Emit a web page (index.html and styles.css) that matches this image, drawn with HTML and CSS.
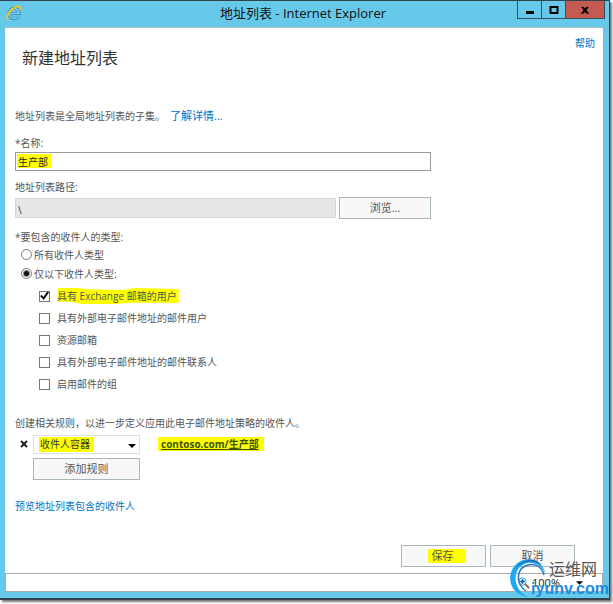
FILE: index.html
```html
<!DOCTYPE html>
<html lang="zh-CN">
<head>
    <meta charset="UTF-8">
    <meta name="viewport" content="width=device-width, initial-scale=1.0">
    <title>地址列表 - Internet Explorer</title>
    <link rel="stylesheet" href="styles.css">
</head>
<body>
    <div class="window">
        <div class="titlebar">
            <svg class="ie-icon" width="16" height="16" viewBox="0 0 16 16" aria-hidden="true">
                <path d="M12.700 11.200a5.200 5.200 0 1 1 .8-2.700H4.500" fill="none" stroke="#3a8fc4" stroke-width="3.200"/>
                <path d="M12.500 11a5 5 0 1 1 .7-2.600H4.500" fill="none" stroke="#86d0f2" stroke-width="1.400"/>
                <path d="M2.200 14.700C-1 13 3 5.600 8.600 2.600c4-2.200 6.900-1.400 5.300 2.200" fill="none" stroke="#f3c51d" stroke-width="1.800"/>
            </svg>
            <span class="titlebar-text">地址列表 - Internet Explorer</span>
            <div class="window-buttons">
                <button class="win-btn" aria-label="最小化">
                    <svg width="10" height="10" viewBox="0 0 10 10"><path d="M1 7.500h8" stroke="#000" stroke-width="3"/></svg>
                </button>
                <button class="win-btn" aria-label="最大化">
                    <svg width="10" height="10" viewBox="0 0 10 10"><rect x="1.500" y="2" width="7" height="6" fill="none" stroke="#000" stroke-width="2"/></svg>
                </button>
                <button class="win-btn win-close" aria-label="关闭">
                    <svg width="10" height="10" viewBox="0 0 10 10"><path d="M1.500 2h2L5 3.800 6.500 2h2L6.200 5l2.500 3.500h-2.200L5 6.400 3.500 8.500H1.300L3.800 5z" fill="#000" stroke="#000" stroke-width=".4"/></svg>
                </button>
            </div>
        </div>

        <div class="page">
            <form class="form">
                <header class="form-header">
                    <h1>新建地址列表</h1>
                    <a class="help" href="#">帮助</a>
                </header>

                <p class="intro">地址列表是全局地址列表的子集。<a class="more" href="#">了解详情...</a></p>

                <label class="name-label" for="name">*名称:</label>
                <input class="name-input" id="name" type="text" value="生产部">

                <label class="path-label" for="path">地址列表路径:</label>
                <div class="path-row">
                    <input class="path-input" id="path" type="text" value="\" readonly>
                    <button class="btn browse" type="button">浏览...</button>
                </div>

                <fieldset class="types">
                    <legend>*要包含的收件人的类型:</legend>
                    <label class="radio-row"><input type="radio" name="type">所有收件人类型</label>
                    <label class="radio-row"><input type="radio" name="type" checked>仅以下收件人类型:</label>
                    <div class="checks">
                        <label class="check-row"><input type="checkbox" checked><span class="marked">具有 Exchange 邮箱的用户</span></label>
                        <label class="check-row"><input type="checkbox"><span>具有外部电子邮件地址的邮件用户</span></label>
                        <label class="check-row"><input type="checkbox"><span>资源邮箱</span></label>
                        <label class="check-row"><input type="checkbox"><span>具有外部电子邮件地址的邮件联系人</span></label>
                        <label class="check-row"><input type="checkbox"><span>启用邮件的组</span></label>
                    </div>
                </fieldset>

                <p class="rules-text">创建相关规则，以进一步定义应用此电子邮件地址策略的收件人。</p>
                <div class="rule">
                    <button class="remove" type="button" aria-label="删除规则">
                        <svg width="8" height="8" viewBox="0 0 8 8"><path d="M1 1l6 6M7 1L1 7" stroke="#222" stroke-width="2"/></svg>
                    </button>
                    <div class="select-wrap">
                        <select aria-label="规则">
                            <option>收件人容器</option>
                        </select>
                        <svg class="arrow" width="8" height="4" viewBox="0 0 8 4"><path d="M0 0h8L4 4z" fill="#000"/></svg>
                    </div>
                    <a class="container-link" href="#">contoso.com/生产部</a>
                </div>
                <button class="btn add-rule" type="button">添加规则</button>

                <a class="preview" href="#">预览地址列表包含的收件人</a>

                <div class="actions">
                    <button class="btn action" type="button"><span class="save-mark">保存</span></button>
                    <button class="btn action" type="button">取消</button>
                </div>
            </form>

            <div class="statusbar">
                <button class="zoom" type="button">
                    <svg width="12" height="12" viewBox="0 0 12 12" aria-hidden="true">
                        <path d="M7 7l4 4" stroke="#8a6a45" stroke-width="2"/>
                        <circle cx="4.500" cy="4.500" r="3.700" fill="#d9edfb" stroke="#5b9bd0"/>
                        <path d="M4.500 2.300v4.400M2.300 4.500h4.400" stroke="#1556a8" stroke-width="1.500"/>
                    </svg>
                    <span>100%</span>
                    <svg class="zoom-arrow" width="7" height="4" viewBox="0 0 8 4" aria-hidden="true"><path d="M0 0h8L4 4z" fill="#000"/></svg>
                </button>
            </div>
        </div>
    </div>

    <div class="watermark">
        <svg class="watermark-logo" width="40" height="42" viewBox="0 0 40 42" aria-hidden="true">
            <path d="M19 40C3 38-3 23 4 11 12-1 31-2 37 17 31 5 18 2 10 11 3 20 7 34 19 40z" fill="#1daaf0"/>
            <path d="M17 34C7 27 7 14 16 9c8-4 17 0 19 9" fill="none" stroke="#2a77c5" stroke-width="1.500"/>
            <path d="M6 12C12 2 27-1 33 9 25 2 14 3 6 12z" fill="#1a6eb8"/>
        </svg>
        <span class="watermark-name">运维网</span>
        <span class="watermark-site">iyunv.com</span>
    </div>
</body>
</html>
```
FILE: styles.css
```css
* {
    box-sizing: border-box;
}

body {
    margin: 0;
    min-height: 100vh;
    display: flex;
    padding: 0 3px 4px 0;
    background: #fff;
    color: #555;
    font-family: "Open Sans", "Noto Sans CJK SC", sans-serif;
    font-size: 10px;
    line-height: 16px;
    position: relative;
}

h1, p, fieldset, legend {
    margin: 0;
    padding: 0;
    border: none;
}

a {
    color: #0072c6;
    text-decoration: none;
}

button, input, select {
    font: inherit;
    color: inherit;
    margin: 0;
    padding: 0;
}

/* Window */
.window {
    flex: 1;
    display: flex;
    flex-direction: column;
    padding: 0 6px 6px 5px;
    background: #66c9ea;
    border: solid #34434d;
    border-width: 1px 1px 2px 0;
    box-shadow: 2px 2px 2px #777;
}

.titlebar {
    height: 26px;
    display: flex;
    align-items: flex-start;
}

.ie-icon {
    margin: 4px 0 0 1px;
}

.titlebar-text {
    flex: 1;
    margin-left: 66px;
    padding-top: 2px;
    text-align: center;
    font-size: 13px;
    line-height: 20px;
    color: #111;
}

.window-buttons {
    display: flex;
    margin-right: -2px;
}

.win-btn {
    width: 25px;
    height: 18px;
    display: flex;
    align-items: center;
    justify-content: center;
    background: #66c9ea;
    border: 1px solid #35505e;
    border-top: none;
    margin-left: -1px;
}

.win-close {
    width: 40px;
    background: #c45a50;
}

.page {
    flex: 1;
    display: flex;
    flex-direction: column;
    background: #fff;
    border-top: 1px solid #a9bfc9;
}

/* Form */
.form {
    flex: 1;
    display: flex;
    flex-direction: column;
    align-items: flex-start;
    padding: 7px 8px 6px 10px;
}

.form-header {
    align-self: stretch;
    display: flex;
    justify-content: space-between;
    align-items: flex-start;
}

h1 {
    margin: 11px 0 0 7px;
    font-size: 16px;
    font-weight: normal;
    line-height: 24px;
    color: #333;
}

.intro {
    margin-top: 38px;
}

.more {
    margin-left: 5px;
    font-size: 11px;
}

.name-label {
    margin-top: 11px;
}

.name-input,
.path-row {
    width: 100%;
    max-width: 416px;
}

.name-input {
    height: 19px;
    margin-top: 1px;
    padding-left: 2px;
    border: 1px solid #999;
    color: #222;
    background: linear-gradient(#ff0, #ff0) 1px 1px / 34px 14px no-repeat #fff;
}

.path-label {
    margin-top: 8px;
}

.path-row {
    display: flex;
    gap: 3px;
    margin-top: 2px;
}

.path-input {
    flex: 1;
    min-width: 0;
    height: 20px;
    margin-top: 1px;
    padding: 4px 2px 0;
    background: #e6e6e6;
    border: 1px solid #d3dadd;
    color: #333;
}

.btn {
    height: 22px;
    padding: 0;
    background: #f8f8f8;
    border: 1px solid #a9b6ba;
    font-size: 11px;
}

.browse {
    width: 92px;
}

.types {
    margin-top: 10px;
}

.types legend {
    line-height: 16px;
}

.radio-row {
    display: flex;
    align-items: center;
    gap: 2px;
    height: 19px;
    padding-left: 6px;
}

.radio-row input {
    appearance: none;
    width: 11px;
    height: 11px;
    border: 1px solid #777;
    border-radius: 50%;
}

.radio-row input:checked {
    background: radial-gradient(circle, #111 0 2px, #fff 4px);
}

.checks {
    margin-top: 2px;
    padding-left: 24px;
}

.check-row {
    display: flex;
    align-items: center;
    gap: 5px;
    height: 22px;
}

.check-row input {
    appearance: none;
    width: 11px;
    height: 11px;
    border: 1px solid #777;
}

.check-row input:checked::after {
    content: "";
    display: block;
    width: 9px;
    height: 9px;
    background: #111;
    clip-path: polygon(0 50%, 20% 38%, 38% 62%, 80% 0, 100% 12%, 42% 95%);
}

.check-row span {
    padding: 0 2px;
}

/* Highlighter strokes */
.marked {
    position: relative;
    z-index: 0;
}

.marked::before {
    content: "";
    position: absolute;
    inset: 0;
    z-index: -1;
    background: #ff0;
    clip-path: polygon(2% 0, 18% 0, 28% 8%, 55% 12%, 65% 0, 100% 6%, 100% 94%, 62% 92%, 50% 100%, 22% 100%, 14% 88%, 2% 84%);
}

.rules-text {
    margin-top: 20px;
}

.rule {
    display: flex;
    align-items: center;
    height: 20px;
    margin-top: 3px;
    padding-left: 5px;
}

.remove {
    display: flex;
    width: 8px;
    margin-right: 5px;
    background: none;
    border: none;
}

.select-wrap {
    position: relative;
}

.select-wrap select {
    appearance: none;
    display: block;
    width: 107px;
    height: 19px;
    padding-left: 6px;
    border: 1px solid #d8e0e4;
    border-radius: 0;
    color: #333;
    background: linear-gradient(#ff0, #ff0) 5px 1px / 55px 15px no-repeat #fff;
}

.arrow {
    position: absolute;
    top: 9px;
    right: 4px;
}

.container-link {
    margin-left: 18px;
    padding: 0 5px 0 3px;
    line-height: 14px;
    background: #ff0;
    color: #3c5200;
    font-weight: bold;
    text-decoration: underline;
}

.add-rule {
    width: 107px;
    margin: 4px 0 0 18px;
}

.preview {
    margin-top: 18px;
}

.actions {
    align-self: flex-end;
    display: flex;
    gap: 4px;
    margin-top: auto;
    padding-right: 20px;
}

.action {
    width: 85px;
}

.save-mark {
    display: inline-block;
    margin-left: 6px;
    padding: 0 12px 0 4px;
    background: #ff0;
    line-height: 14px;
}

/* Status bar */
.statusbar {
    display: flex;
    justify-content: flex-end;
    height: 19px;
    padding-right: 19px;
    border: 1px solid #aaa;
}

.zoom {
    display: flex;
    align-items: center;
    gap: 2px;
    background: none;
    border: none;
    color: #222;
    font-size: 11px;
}

.zoom-arrow {
    margin-left: 14px;
}

/* Site mark over the corner of the window */
.watermark {
    position: absolute;
    right: 4px;
    bottom: 5px;
    display: grid;
    grid-template-columns: 22px 18px auto;
    line-height: 18px;
}

.watermark-logo {
    grid-area: 1 / 1 / 3 / 3;
}

.watermark-name {
    grid-area: 1 / 3;
    padding-top: 3px;
    font-size: 16px;
    color: #555;
}

.watermark-site {
    grid-area: 2 / 2 / 3 / 4;
    font-family: "Liberation Sans", Arial, sans-serif;
    font-size: 16px;
    font-weight: bold;
    color: #1d8be0;
}
```
